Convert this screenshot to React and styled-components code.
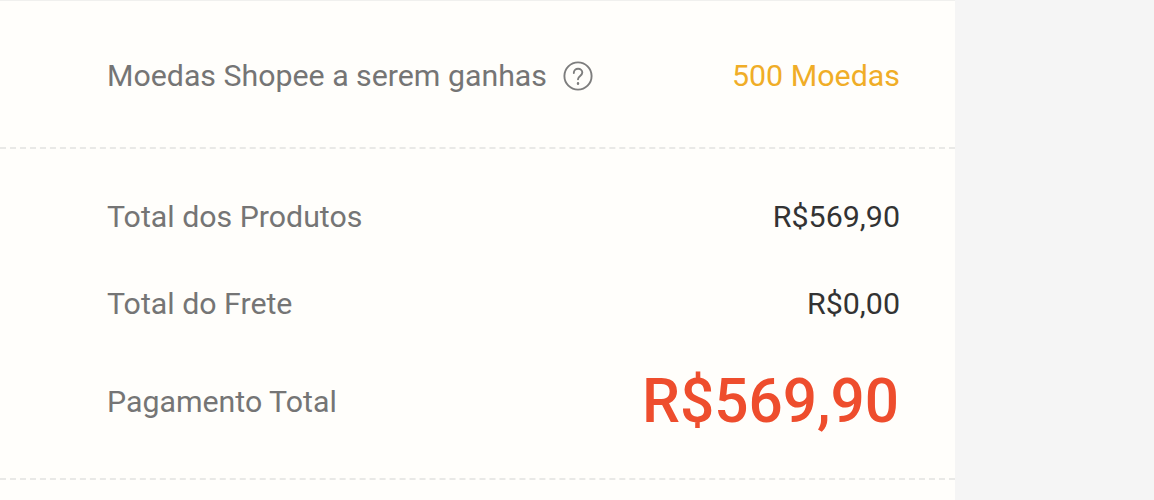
import React from 'react'
import styled, { createGlobalStyle } from 'styled-components'

const Global = createGlobalStyle`
	html, body {
		margin: 0;
		padding: 0;
		background: #f5f5f5;
	}
`

const Page = styled.div`
	width: 1154px;
	height: 500px;
	overflow: hidden;
	background: #f5f5f5;
	font-family: Roboto, "Liberation Sans", sans-serif;
`

const Panel = styled.div`
	width: 955px;
	height: 500px;
	box-sizing: border-box;
	background: #fffefb;
	border-top: 1px solid #f0f0ee;
	display: flex;
	flex-direction: column;
`

const Section = styled.div`
	display: flex;
	flex-direction: column;
	padding: ${props => props.$padding};
	border-bottom: 2px dashed #e9e9e7;
`

const Row = styled.div`
	display: flex;
	justify-content: space-between;
	align-items: center;
	height: ${props => props.$height}px;
`

const Label = styled.div`
	display: flex;
	align-items: center;
	gap: 16px;
	color: #757575;
	font-size: 30.3px;
`

const Value = styled.div`
	color: ${props => props.$color || '#333'};
	font-size: ${props => props.$size || 30.4}px;
	font-weight: ${props => props.$weight || 400};
`

const Total = styled(Value)`
	margin-right: 1px;
`

const Help = styled.svg`
	width: 30px;
	height: 30px;
	display: block;
`

const HelpIcon = () => (
	<Help viewBox="0 0 30 30" fill="none" stroke="#7d7d7d" strokeWidth="1.9" strokeLinecap="round">
		<circle cx="15" cy="15" r="13.6" />
		<path d="M10.8 12c0-2.500 1.900-4.200 4.300-4.200s4.200 1.600 4.200 3.800c0 3.200-4.300 3.400-4.300 6.600" />
		<path d="M15 22.300v.5" strokeWidth="2.400" />
	</Help>
)

const App = () => (
	<Page>
		<Global />
		<Panel>
			<Section $padding="3px 55px 0 107px">
				<Row $height={143}>
					<Label>
						Moedas Shopee a serem ganhas
						<HelpIcon />
					</Label>
					<Value $color="#f0ad27">500 Moedas</Value>
				</Row>
			</Section>
			<Section $padding="24px 55px 22px 107px">
				<Row $height={87}>
					<Label>Total dos Produtos</Label>
					<Value>R$569,90</Value>
				</Row>
				<Row $height={86}>
					<Label>Total do Frete</Label>
					<Value>R$0,00</Value>
				</Row>
				<Row $height={110}>
					<Label>Pagamento Total</Label>
					<Total $color="#ee4d2d" $size={60.3} $weight={500}>R$569,90</Total>
				</Row>
			</Section>
		</Panel>
	</Page>
)

export default App
